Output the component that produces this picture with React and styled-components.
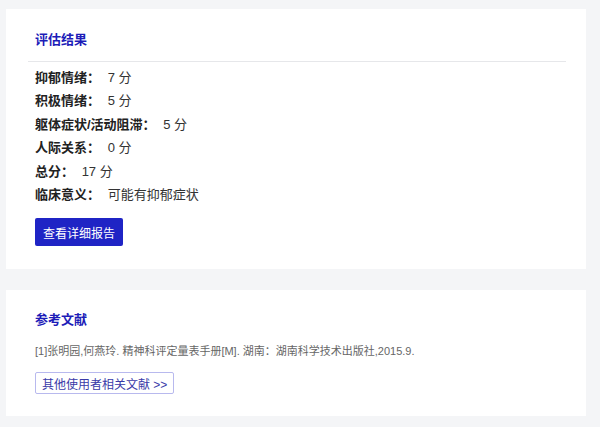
import React from 'react';
import styled, { createGlobalStyle } from 'styled-components';

const Global = createGlobalStyle`
  body {
    margin: 0;
    background: #f4f5f7;
    font-family: "Liberation Sans", "Noto Sans CJK SC", sans-serif;
  }
`;

const Page = styled.div`
  width: 580px;
  padding: 9px 0 0 6px;
  display: flex;
  flex-direction: column;
  gap: 21px;
`;

const Card = styled.div`
  background: #fff;
  padding: ${(p) => p.pad};
`;

const Title = styled.div`
  font-size: 13px;
  font-weight: bold;
  color: #1c1cb8;
  line-height: 18px;
  padding-left: 29px;
`;

const Divider = styled.div`
  height: 1px;
  background: #e6e7ea;
  margin: 12px 20px 4px 22px;
`;

const List = styled.div`
  padding-left: 29px;
  display: flex;
  flex-direction: column;
`;

const Row = styled.div`
  font-size: 13px;
  line-height: 23.4px;
  color: #333;
`;

const Label = styled.span`
  font-weight: bold;
  color: #222;
  margin-right: 4px;
`;

const PrimaryButton = styled.button`
  margin: 12px 0 0 29px;
  width: 88px;
  height: 28px;
  background: #1f24c5;
  color: #fff;
  border: none;
  border-radius: 2px;
  font-family: inherit;
  font-size: 12px;
  align-self: flex-start;
`;

const Ref = styled.div`
  margin: 14px 0 0 29px;
  font-size: 11px;
  color: #666;
  line-height: 16px;
`;

const OutlineButton = styled.button`
  margin: 13px 0 0 29px;
  height: 22px;
  padding: 0 6px;
  background: #fff;
  color: #3a3aa8;
  border: 1px solid #b8b9ee;
  border-radius: 2px;
  font-family: inherit;
  font-size: 12px;
`;

const rows = [
  ['抑郁情绪：', '7 分'],
  ['积极情绪：', '5 分'],
  ['躯体症状/活动阻滞：', '5 分'],
  ['人际关系：', '0 分'],
  ['总分：', '17 分'],
  ['临床意义：', '可能有抑郁症状'],
];

export default function App() {
  return (
    <>
      <Global />
      <Page>
        <Card pad="22px 0 23px">
          <Title>评估结果</Title>
          <Divider />
          <List>
            {rows.map(([k, v]) => (
              <Row key={k}>
                <Label>{k}</Label> {v}
              </Row>
            ))}
          </List>
          <PrimaryButton>查看详细报告</PrimaryButton>
        </Card>
        <Card pad="21px 0 22px">
          <Title>参考文献</Title>
          <Ref>[1]张明园,何燕玲. 精神科评定量表手册[M]. 湖南：湖南科学技术出版社,2015.9.</Ref>
          <OutlineButton>其他使用者相关文献 &gt;&gt;</OutlineButton>
        </Card>
      </Page>
    </>
  );
}
